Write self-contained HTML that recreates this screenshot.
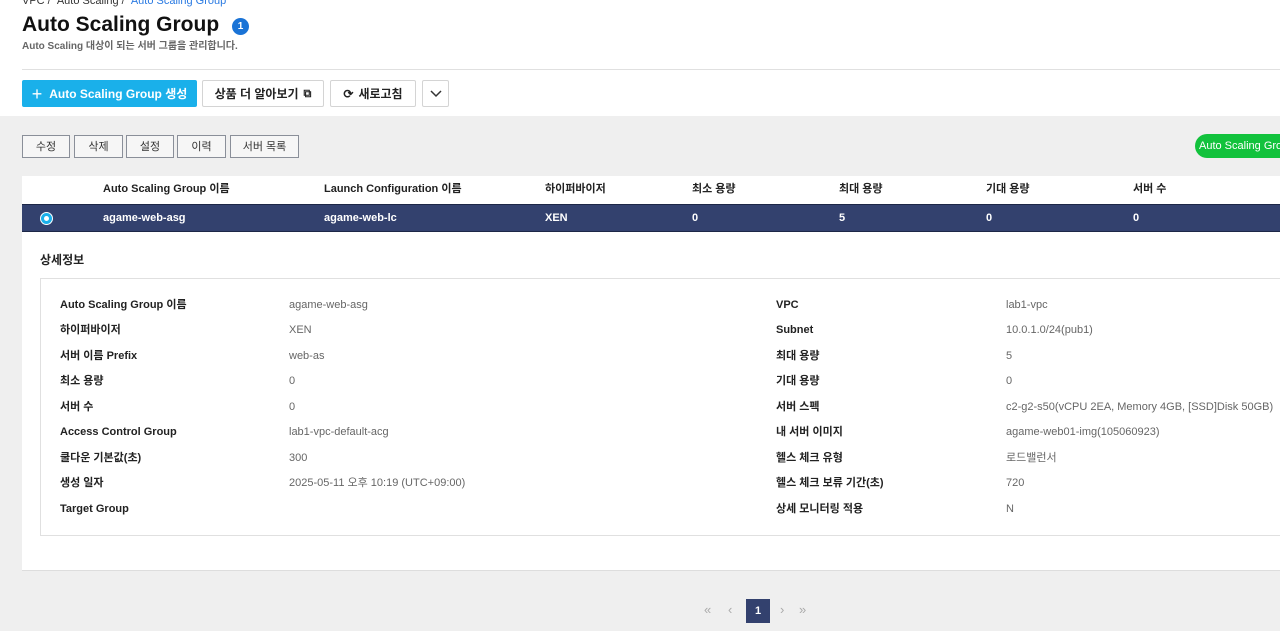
<!DOCTYPE html>
<html><head><meta charset="utf-8"><style>
*{box-sizing:border-box;margin:0;padding:0}
body{width:1280px;height:631px;overflow:hidden;background:#efefef;font-family:"Liberation Sans","Noto Sans CJK KR",sans-serif;position:relative;color:#222}
.a{position:absolute;white-space:nowrap}
.top{position:absolute;left:0;top:0;width:1280px;height:116px;background:#fff}
.btn{position:absolute;top:80px;height:27px;border:1px solid #d4d4d4;background:#fff;font-size:12px;font-weight:bold;display:flex;align-items:center;justify-content:center;border-radius:2px;line-height:14px}
.sb{position:absolute;top:135px;height:23px;border:1px solid #8a8f99;background:#f6f6f6;font-size:11px;display:flex;align-items:center;justify-content:center;color:#333;line-height:14px}
.th,.td,.l,.v{line-height:14px;height:14px;white-space:nowrap}
.th{position:absolute;top:182px;font-size:11px;font-weight:bold}
.td{position:absolute;top:211px;font-size:11px;font-weight:bold;color:#fff}
.l{position:absolute;font-size:11px;font-weight:bold;left:60px}
.v{position:absolute;font-size:11px;color:#666;left:289px}
.l2{left:776px}.v2{left:1006px}
</style></head><body>
<div class="top"></div>
<div class="a" style="left:22px;top:-6px;font-size:11px;color:#333;line-height:14px">VPC / &nbsp;Auto Scaling / &nbsp;<span style="color:#2a7ae2">Auto Scaling Group</span></div>
<div class="a" style="left:22px;top:12px;font-size:21px;font-weight:bold;color:#111;line-height:26px">Auto Scaling Group</div>
<div class="a" style="left:232px;top:18px;width:17px;height:17px;border-radius:50%;background:#1a73d6;color:#fff;font-size:10px;font-weight:bold;text-align:center;line-height:17px">1</div>
<div class="a" style="left:22px;top:40px;font-size:10px;color:#666;font-weight:bold;line-height:14px">Auto Scaling 대상이 되는 서버 그룹을 관리합니다.</div>
<div class="a" style="left:22px;top:69px;width:1258px;height:1px;background:#e0e0e0"></div>
<div class="btn" style="left:22px;width:175px;background:#1ab0ea;border-color:#1ab0ea;color:#fff"><span style="font-size:18px;font-weight:normal;margin-right:7px">+</span>Auto Scaling Group 생성</div>
<div class="btn" style="left:202px;width:122px">상품 더 알아보기 <span style="font-size:11px;margin-left:5px">⧉</span></div>
<div class="btn" style="left:330px;width:86px"><span style="margin-right:5px">⟳</span>새로고침</div>
<div class="btn" style="left:422px;width:27px"><svg width="12" height="8" viewBox="0 0 12 8"><path d="M1 1l5 5 5-5" fill="none" stroke="#333" stroke-width="1.5"/></svg></div>
<div class="sb" style="left:22px;width:48px">수정</div>
<div class="sb" style="left:74px;width:49px">삭제</div>
<div class="sb" style="left:126px;width:48px">설정</div>
<div class="sb" style="left:177px;width:49px">이력</div>
<div class="sb" style="left:230px;width:69px">서버 목록</div>
<div class="a" style="left:1195px;top:134px;width:100px;height:24px;border-radius:12px;background:#12c23c;color:#fff;font-size:11px;line-height:24px;padding-left:4px">Auto Scaling Group</div>
<div class="a" style="left:22px;top:176px;width:1258px;height:395px;background:#fff;border-bottom:1px solid #ddd"></div>
<div class="th" style="left:103px">Auto Scaling Group 이름</div>
<div class="th" style="left:324px">Launch Configuration 이름</div>
<div class="th" style="left:545px">하이퍼바이저</div>
<div class="th" style="left:692px">최소 용량</div>
<div class="th" style="left:839px">최대 용량</div>
<div class="th" style="left:986px">기대 용량</div>
<div class="th" style="left:1133px">서버 수</div>
<div class="a" style="left:22px;top:204px;width:1258px;height:28px;background:#33416e;border-top:1px solid #1d2747;border-bottom:1px solid #1d2747"></div>
<div class="a" style="left:40px;top:212px;width:13px;height:13px;border-radius:50%;background:#1ab0ea;border:1px solid #fff"><div style="width:5px;height:5px;background:#fff;border-radius:50%;margin:3px"></div></div>
<div class="td" style="left:103px">agame-web-asg</div>
<div class="td" style="left:324px">agame-web-lc</div>
<div class="td" style="left:545px">XEN</div>
<div class="td" style="left:692px">0</div>
<div class="td" style="left:839px">5</div>
<div class="td" style="left:986px">0</div>
<div class="td" style="left:1133px">0</div>
<div class="a" style="left:40px;top:253px;font-size:12px;font-weight:bold;line-height:14px">상세정보</div>
<div class="a" style="left:40px;top:278px;width:1240px;height:258px;border:1px solid #e0e0e0;border-right:none"></div>
<div class="l" style="top:298px">Auto Scaling Group 이름</div><div class="v" style="top:298px">agame-web-asg</div>
<div class="l" style="top:323px">하이퍼바이저</div><div class="v" style="top:323px">XEN</div>
<div class="l" style="top:349px">서버 이름 Prefix</div><div class="v" style="top:349px">web-as</div>
<div class="l" style="top:374px">최소 용량</div><div class="v" style="top:374px">0</div>
<div class="l" style="top:400px">서버 수</div><div class="v" style="top:400px">0</div>
<div class="l" style="top:425px">Access Control Group</div><div class="v" style="top:425px">lab1-vpc-default-acg</div>
<div class="l" style="top:451px">쿨다운 기본값(초)</div><div class="v" style="top:451px">300</div>
<div class="l" style="top:476px">생성 일자</div><div class="v" style="top:476px">2025-05-11 오후 10:19 (UTC+09:00)</div>
<div class="l" style="top:502px">Target Group</div>
<div class="l l2" style="top:298px">VPC</div><div class="v v2" style="top:298px">lab1-vpc</div>
<div class="l l2" style="top:323px">Subnet</div><div class="v v2" style="top:323px">10.0.1.0/24(pub1)</div>
<div class="l l2" style="top:349px">최대 용량</div><div class="v v2" style="top:349px">5</div>
<div class="l l2" style="top:374px">기대 용량</div><div class="v v2" style="top:374px">0</div>
<div class="l l2" style="top:400px">서버 스펙</div><div class="v v2" style="top:400px">c2-g2-s50(vCPU 2EA, Memory 4GB, [SSD]Disk 50GB)</div>
<div class="l l2" style="top:425px">내 서버 이미지</div><div class="v v2" style="top:425px">agame-web01-img(105060923)</div>
<div class="l l2" style="top:451px">헬스 체크 유형</div><div class="v v2" style="top:451px">로드밸런서</div>
<div class="l l2" style="top:476px">헬스 체크 보류 기간(초)</div><div class="v v2" style="top:476px">720</div>
<div class="l l2" style="top:502px">상세 모니터링 적용</div><div class="v v2" style="top:502px">N</div>
<div class="a" style="left:704px;top:603px;font-size:13px;color:#aaa;line-height:14px">«</div>
<div class="a" style="left:728px;top:603px;font-size:13px;color:#aaa;line-height:14px">‹</div>
<div class="a" style="left:746px;top:599px;width:24px;height:24px;background:#33416e;color:#fff;font-size:11px;font-weight:bold;text-align:center;line-height:24px">1</div>
<div class="a" style="left:780px;top:603px;font-size:13px;color:#aaa;line-height:14px">›</div>
<div class="a" style="left:799px;top:603px;font-size:13px;color:#aaa;line-height:14px">»</div>
</body></html>
